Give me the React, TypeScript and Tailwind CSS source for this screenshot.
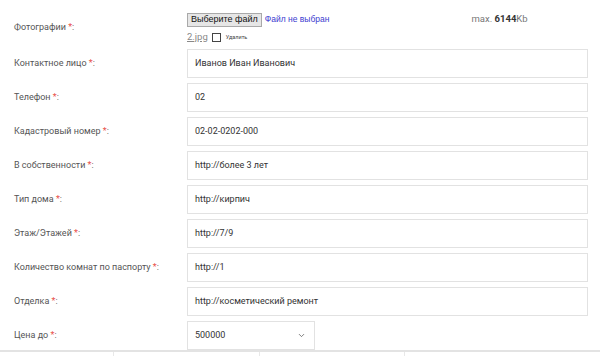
import React from 'react';
import { ChevronDown } from 'lucide-react';

const rows: { label: string; value: string }[] = [
    { label: 'Контактное лицо', value: 'Иванов Иван Иванович' },
    { label: 'Телефон', value: '02' },
    { label: 'Кадастровый номер', value: '02-02-0202-000' },
    { label: 'В собственности', value: 'http://более 3 лет' },
    { label: 'Тип дома', value: 'http://кирпич' },
    { label: 'Этаж/Этажей', value: 'http://7/9' },
    { label: 'Количество комнат по паспорту', value: 'http://1' },
    { label: 'Отделка', value: 'http://косметический ремонт' },
];

const Label: React.FC<{ text: string }> = ({ text }) => (
    <div className="w-[187px] shrink-0 pl-[14px] text-[9px] text-[#555] whitespace-nowrap">
        {text} <span className="text-[#e8504a]">*</span>:
    </div>
);

const App: React.FC = () => {
    return (
        <div className="w-[600px] h-[356px] overflow-hidden bg-white font-['Roboto',sans-serif] flex flex-col">
            <div className="flex items-center pt-[12px] h-[43px]">
                <Label text="Фотографии" />
                <div className="flex flex-col gap-[5px] w-[401px]">
                    <div className="flex items-center h-[14px]">
                        <button className="h-[14px] px-[3px] bg-[#e6e6e6] border border-[#a9a9a9] text-[9px] leading-none text-[#111] font-['Liberation_Sans',sans-serif]">
                            Выберите файл
                        </button>
                        <span className="ml-[3px] text-[8.5px] text-[#3b3bd0] font-['Liberation_Sans',sans-serif]">Файл не выбран</span>
                        <span className="ml-[142px] text-[9.5px] text-[#777]">
                            max. <b className="text-[#333]">6144</b>Kb
                        </span>
                    </div>
                    <div className="flex items-center h-[11px]">
                        <span className="text-[9.5px] text-[#888] underline">2.jpg</span>
                        <span className="ml-[4px] w-[9px] h-[9px] border border-[#444] bg-white" />
                        <span className="ml-[5px] text-[5.5px] text-[#444]">Удалить</span>
                    </div>
                </div>
            </div>
            <div className="mt-[6px] flex flex-col gap-[5px]">
                {rows.map((r) => (
                    <div key={r.label} className="flex items-center">
                        <Label text={r.label} />
                        <div className="w-[401px] h-[29px] border border-[#e2e2e2] flex items-center px-[7px] text-[9px] text-[#333]">
                            {r.value}
                        </div>
                    </div>
                ))}
                <div className="flex items-center">
                    <Label text="Цена до" />
                    <div className="w-[128px] h-[29px] border border-[#e2e2e2] flex items-center justify-between pl-[7px] pr-[8px] text-[9px] text-[#333]">
                        <span>500000</span>
                        <ChevronDown size={9} strokeWidth={2} className="text-[#555]" />
                    </div>
                </div>
            </div>
            <div className="border-t-2 border-[#e3e3e3] flex h-[6px] shrink-0">
                <div className="w-[113px]" />
                <div className="w-[146px] border-l border-[#e8e8e8]" />
                <div className="w-[145px] border-l border-[#e8e8e8]" />
                <div className="flex-1 border-l border-[#e8e8e8]" />
            </div>
        </div>
    );
};

export default App;
